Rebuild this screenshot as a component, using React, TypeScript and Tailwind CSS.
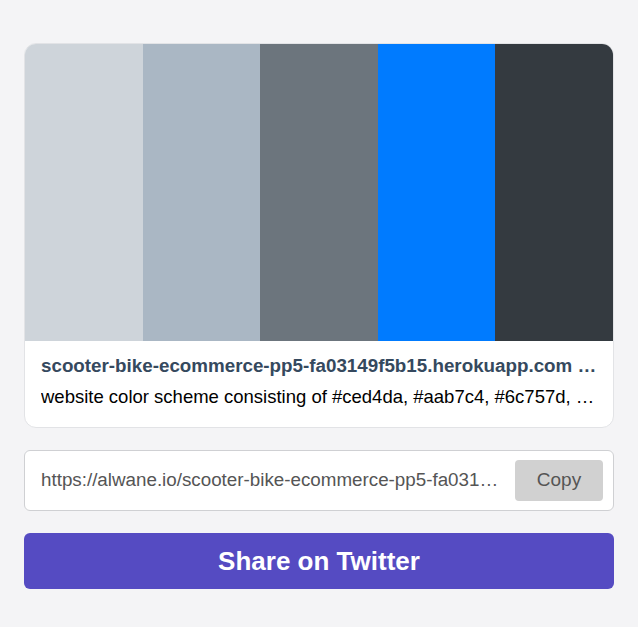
import React from 'react';

const colors = ['#ced4da', '#aab7c4', '#6c757d', '#007bff', '#343a40'];

export default function App() {
  const url = 'https://alwane.io/scooter-bike-ecommerce-pp5-fa03149f5b15.herokuapp.com';
  return (
    <div className="min-h-screen bg-[#f4f4f6] px-6 pt-[43px] font-['Liberation_Sans',Arial,sans-serif]">
      <div className="overflow-hidden rounded-xl border border-[#e2e3e6] bg-white">
        <div className="flex h-[297px]">
          {colors.map(c => (
            <div key={c} className="flex-1" style={{ backgroundColor: c }} />
          ))}
        </div>
        <div className="pl-4 pr-[14px] pt-[13px] pb-[18px]">
          <div className="truncate text-[18.8px] font-bold leading-[24px] text-[#35495e]">
            scooter-bike-ecommerce-pp5-fa03149f5b15.herokuapp.com website
          </div>
          <div className="mt-[7px] truncate text-[18.5px] leading-[24px] text-black">
            website color scheme consisting of #ced4da, #aab7c4, #6c757d, #007bff, #343a40.
          </div>
        </div>
      </div>
      <div className="mt-[22px] flex h-[61px] items-center gap-2 rounded-md border border-[#cfd0d3] bg-white pl-4 pr-[10px]">
        <div className="min-w-0 flex-1 truncate text-[18.8px] text-[#555]">{url}</div>
        <button className="h-[41px] w-[88px] shrink-0 rounded bg-[#d1d1d1] text-[19px] text-[#555]">Copy</button>
      </div>
      <button className="mt-[22px] h-[56px] w-full rounded-md bg-[#554bc2] text-[26px] font-bold text-white">
        Share on Twitter
      </button>
    </div>
  );
}
